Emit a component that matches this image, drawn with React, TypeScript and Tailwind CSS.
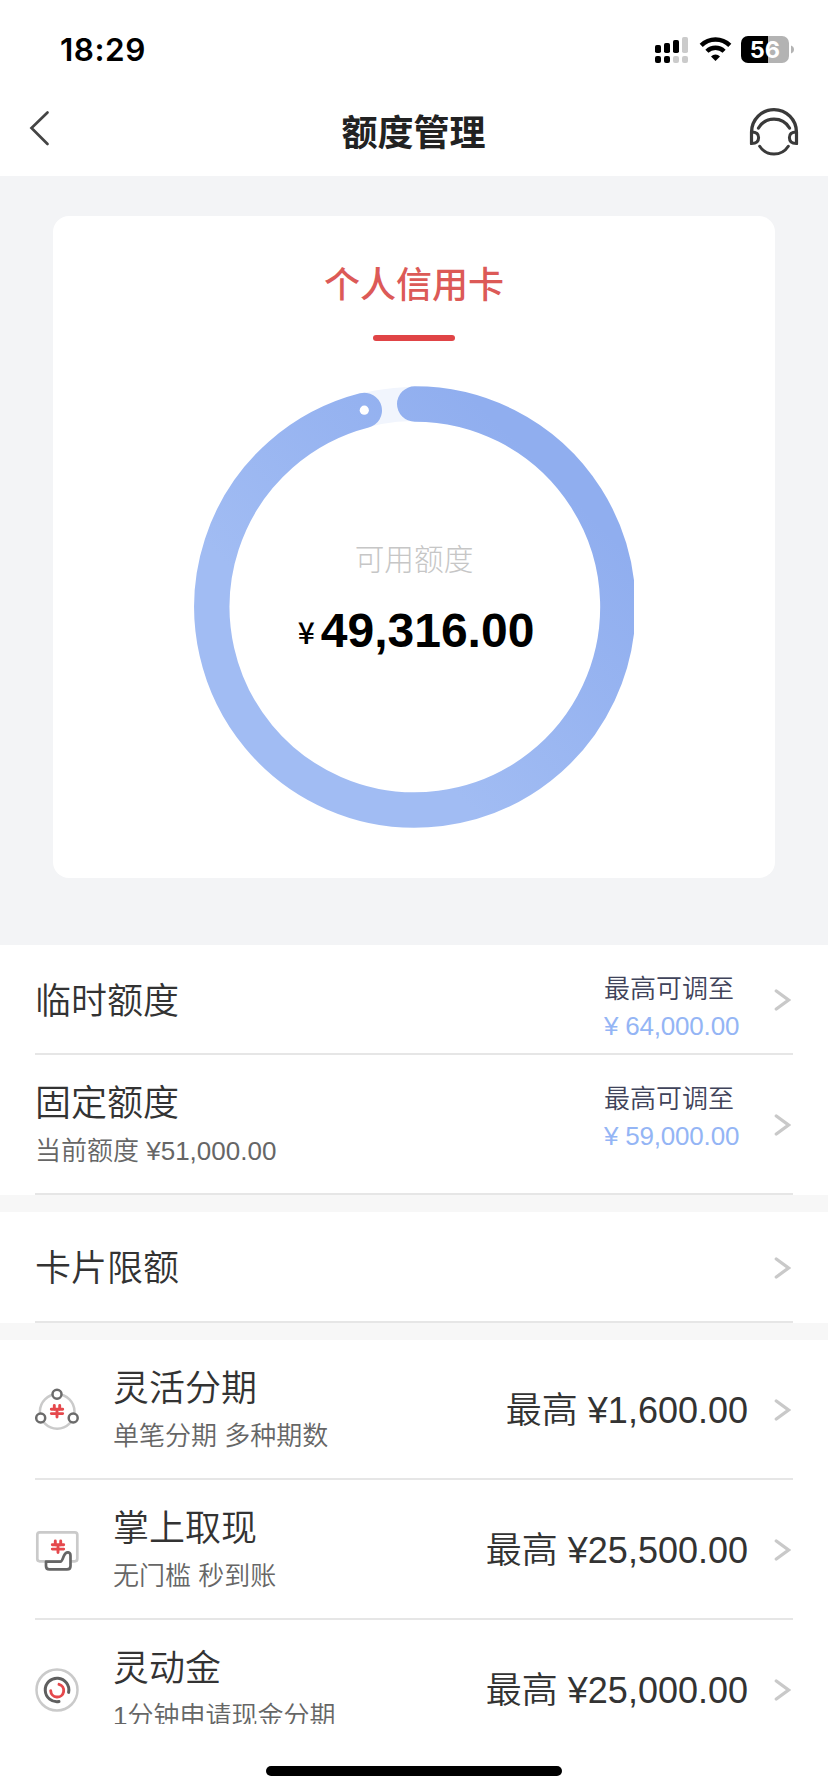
import type { ReactNode } from "react";

const SANS = "font-['Liberation_Sans','Noto_Sans_CJK_SC',sans-serif]";

function StatusIcons() {
  return (
    <svg width="142" height="30" viewBox="0 0 142 30" className="block">
      <g fill="#000">
        <rect x="1" y="10" width="6" height="8" rx="1.8" />
        <rect x="10" y="8" width="6" height="10" rx="1.8" />
        <rect x="19" y="5" width="6" height="13" rx="1.8" />
        <rect x="1" y="21" width="6" height="7" rx="2" />
        <rect x="10" y="21" width="6" height="7" rx="2" />
      </g>
      <g fill="#cbcbcb">
        <rect x="28" y="2" width="6" height="16" rx="1.8" />
        <rect x="19" y="21" width="6" height="7" rx="2" />
        <rect x="28" y="21" width="6" height="7" rx="2" />
      </g>
      <g fill="none" stroke="#000" strokeWidth="4.4">
        <path d="M47.2 10.400a20.3 20.3 0 0 1 28.6 0" />
        <path d="M52.9 16.2a12.3 12.3 0 0 1 17.2 0" />
      </g>
      <path d="M61.5 26l-4.500-4.600a6.400 6.400 0 0 1 9 0z" fill="#000" />
      <path d="M94 1h20v27H94a7 7 0 0 1-7-7V8a7 7 0 0 1 7-7z" fill="#000" />
      <path d="M114 1h14a7 7 0 0 1 7 7v13a7 7 0 0 1-7 7h-14z" fill="#b3b3b3" />
      <path d="M137 10.5c4 1.2 4 6.8 0 8z" fill="#b3b3b3" />
      <text x="110.8" y="23" textAnchor="middle" fill="#fff" className="font-['Inter',sans-serif] text-[23.500px] font-bold">
        56
      </text>
    </svg>
  );
}

function HeadsetIcon() {
  return (
    <svg width="50" height="50" viewBox="0 0 50 50" fill="none" stroke="#3a3a3a" strokeWidth="3.4" className="block">
      <path d="M2.600 37V25a22.400 22.400 0 0 1 44.800 0v12" />
      <path d="M2.600 25c5 0 7 2 7 5.500s-2 6-7 6z" fill="#fff" strokeWidth="3" />
      <path d="M47.400 25c-5 0-7 2-7 5.500s2 6 7 6z" fill="#fff" strokeWidth="3" />
      <path d="M9.500 21a18 18 0 0 1 31 0" strokeWidth="3.200" strokeLinecap="round" />
      <path d="M10.700 39.300a17 17 0 0 0 28.600 0" strokeWidth="3" strokeLinecap="round" />
    </svg>
  );
}

function Chevron() {
  return (
    <svg width="17" height="24" viewBox="0 0 17 24" className="mt-[2px] block shrink-0">
      <path d="M2.300 3l12.200 9-12.200 9" fill="none" stroke="#c9c9c9" strokeWidth="3.300" strokeLinecap="round" />
    </svg>
  );
}

function Yen({ x, y }: { x: number; y: number }) {
  return (
    <g transform={`translate(${x} ${y})`} stroke="#e5484c" strokeWidth="2.900" strokeLinecap="round" fill="none">
      <path d="M-2.700-5.500v4M2.700-5.500v4M-5.700-1.700H5.700M-5.700 2.600H5.700M0-1v7" />
    </g>
  );
}

function InstallmentIcon() {
  return (
    <svg width="44" height="46" viewBox="0 -1 44 46" fill="none" className="block">
      <circle cx="22.200" cy="24.500" r="17.300" stroke="#cacaca" strokeWidth="2.500" />
      <g fill="#fff" stroke="#6b6b6b" strokeWidth="2.500">
        <circle cx="22" cy="7.300" r="4.500" />
        <circle cx="5.700" cy="31" r="4.500" />
        <circle cx="38.200" cy="31" r="4.500" />
      </g>
      <Yen x={22} y={24} />
    </svg>
  );
}

function CashIcon() {
  return (
    <svg width="44" height="44" viewBox="0 0 44 44" fill="none" className="mt-[4px] block">
      <rect x="2.300" y="3.300" width="40" height="29" rx="2.500" stroke="#cacaca" strokeWidth="2.700" />
      <path
        d="M11 32.700h14.500c1.300 0 2.200-3 3.200-5.500 1.200-3 2.700-4 4.500-3.800 1.500.2 2.300 1.300 2.300 3.300v10.200c0 2.300-1.300 3.500-3.500 3.500H14.500c-2.200 0-3.500-1.200-3.500-3.500z"
        fill="#fff"
        stroke="#666"
        strokeWidth="2.700"
        strokeLinejoin="round"
      />
      <Yen x={23} y={17.500} />
    </svg>
  );
}

function SwirlIcon() {
  return (
    <svg width="44" height="44" viewBox="0 0 44 44" fill="none" strokeLinecap="round" className="mt-[2px] block">
      <circle cx="22" cy="22" r="20.500" stroke="#cacaca" strokeWidth="2.500" />
      <path d="M33.600 24.400A11.800 11.800 0 1 0 24 33.600" stroke="#5f5f5f" strokeWidth="3" />
      <path d="M24 16.300a6.500 6.500 0 1 1-8.300 6.500" stroke="#e5484c" strokeWidth="2.900" />
    </svg>
  );
}

function Gauge() {
  return (
    <svg width="440" height="444" viewBox="194 385 440 444" className="block">
      <defs>
        <linearGradient id="ring" x1="1" y1="0" x2="0.150" y2="0.850">
          <stop offset="0.200" stopColor="#90aeef" />
          <stop offset="0.800" stopColor="#a1bcf3" />
        </linearGradient>
      </defs>
      <circle cx="414.700" cy="607" r="203" fill="none" stroke="#f1f5fd" strokeWidth="34" />
      <path
        d="M414.700 404A203 203 0 1 1 364.300 410.400"
        fill="none"
        stroke="url(#ring)"
        strokeWidth="35.400"
        strokeLinecap="round"
      />
      <circle cx="364.300" cy="410.200" r="4.600" fill="#fff" />
    </svg>
  );
}

function Row({ height, children }: { height: string; children: ReactNode }) {
  return (
    <div className="bg-white pl-[35px] pr-[35px]">
      <div className={`flex items-center border-b-2 border-[#e6e6e6] pr-[2px] ${height}`}>{children}</div>
    </div>
  );
}

function Labels({ title, note }: { title: string; note?: string }) {
  return (
    <div className="flex flex-1 flex-col whitespace-nowrap pt-[5px]">
      <span className="text-[36px] leading-[50px] font-[350] text-[#333]">{title}</span>
      {note && <span className="text-[26px] leading-[45px] font-[350] text-[#666]">{note}</span>}
    </div>
  );
}

function MaxAdjust({ amount }: { amount: string }) {
  return (
    <div className="mr-[32px] flex w-[138px] flex-col whitespace-nowrap text-[26px]">
      <span className="leading-[38px] font-[350] text-[#3f435a]">最高可调至</span>
      <span className="leading-[36px] tracking-[-0.2px] text-[#94b5f5]">¥ {amount}</span>
    </div>
  );
}

const offers = [
  { icon: <InstallmentIcon />, title: "灵活分期", note: "单笔分期 多种期数", amount: "1,600.00" },
  { icon: <CashIcon />, title: "掌上取现", note: "无门槛 秒到账", amount: "25,500.00" },
  { icon: <SwirlIcon />, title: "灵动金", note: "1分钟申请现金分期", amount: "25,000.00" },
];

export default function App() {
  return (
    <div className={`flex h-[1792px] w-[828px] flex-col overflow-hidden bg-white ${SANS}`}>
      <div className="flex h-[90px] shrink-0 items-start justify-between pl-[60px] pr-[32px] pt-[35px]">
        <span className="font-['Inter',sans-serif] text-[31.500px] leading-[30px] font-semibold tracking-[0.5px] text-black">18:29</span>
        <StatusIcons />
      </div>
      <header className="flex h-[86px] shrink-0 items-start justify-between pl-[28px] pr-[29px]">
        <svg width="50" height="40" viewBox="0 0 50 40" className="mt-[18px] block">
          <path d="M19.500 4.500L3.500 20l16 16" fill="none" stroke="#444" strokeWidth="2.700" strokeLinecap="round" />
        </svg>
        <h1 className="mt-[20px] text-[36px] leading-[48px] font-bold text-[#222]">额度管理</h1>
        <div className="mt-[17px]">
          <HeadsetIcon />
        </div>
      </header>

      <main className="h-[1548px] shrink-0 overflow-hidden">
        <section className="h-[769px] bg-[#f3f4f6] px-[53px] pt-[40px]">
          <div className="flex h-[662px] flex-col items-center rounded-[16px] bg-white pt-[46px]">
            <h2 className="text-[36px] leading-[48px] font-medium text-[#dc5a57]">个人信用卡</h2>
            <div className="mt-[25px] h-[6px] w-[82px] rounded-full bg-[#e04446]" />
            <div className="mt-[44px] grid place-items-center">
              <div className="col-start-1 row-start-1">
                <Gauge />
              </div>
              <div className="col-start-1 row-start-1 flex flex-col items-center pb-[14px]">
                <span className="text-[29.700px] leading-[40px] font-light text-[#c6c6c6]">可用额度</span>
                <div className="mt-[21px] ml-[4px] flex items-baseline gap-[6px] text-black">
                  <span className="font-['Noto_Sans_CJK_SC',sans-serif] relative -top-[3px] text-[30px] leading-[40px] font-medium">¥</span>
                  <span className="text-[48px] leading-[60px] font-bold">49,316.00</span>
                </div>
              </div>
            </div>
          </div>
        </section>

        <Row height="h-[110px]">
          <Labels title="临时额度" />
          <div className="pt-[15px]">
            <MaxAdjust amount="64,000.00" />
          </div>
          <Chevron />
        </Row>
        <Row height="h-[140px]">
          <Labels title="固定额度" note="当前额度 ¥51,000.00" />
          <div className="pb-[14px]">
            <MaxAdjust amount="59,000.00" />
          </div>
          <Chevron />
        </Row>
        <div className="h-[17px] bg-[#f7f7f7]" />
        <Row height="h-[111px]">
          <Labels title="卡片限额" />
          <Chevron />
        </Row>
        <div className="h-[17px] bg-[#f7f7f7]" />
        {offers.map((o) => (
          <Row key={o.title} height="h-[140px]">
            <div className="mr-[34px]">{o.icon}</div>
            <Labels title={o.title} note={o.note} />
            <span className="mr-[26px] whitespace-nowrap pt-[4px] text-[36px] leading-[50px] font-[350] text-[#333]">最高 ¥{o.amount}</span>
            <Chevron />
          </Row>
        ))}
      </main>

      <div className="mx-auto mt-[42px] h-[10px] w-[296px] shrink-0 rounded-full bg-black" />
    </div>
  );
}
